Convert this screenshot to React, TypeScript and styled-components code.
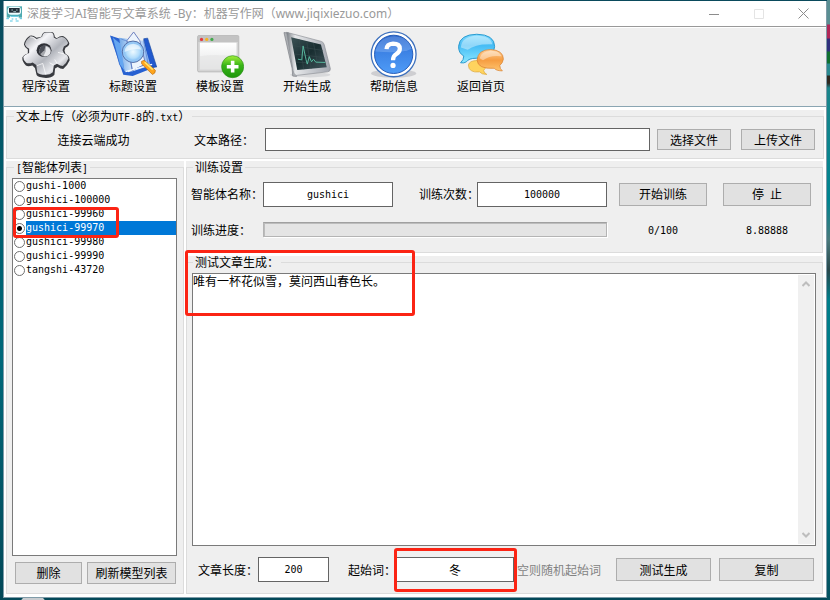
import React, { useState } from "react";
import styled, { createGlobalStyle } from "styled-components";

const GlobalStyle = createGlobalStyle`
  *, *::before, *::after { box-sizing: border-box; }
  body {
    margin: 0;
    color: #000;
    font: 12px/14px "Noto Sans CJK SC", sans-serif;
  }
  button, input, textarea { font: inherit; color: inherit; margin: 0; border-radius: 0; }
`;

const Desktop = styled.div`
  display: flex;
  min-height: 100vh;
  padding: 1px 3px 2px;
  background:
    radial-gradient(ellipse 12px 4px at 33px 100%, #c8ccd0 90%, transparent) no-repeat,
    linear-gradient(#5a8f93 24px, #b02858 25px 38px, #30307c 39px 51px, #107030 52px 63px, #2a8a90 64px 75px, #302820 76px 83px, #1b858b 88px, #008490 200px, #4a7a7c 240px, #29484c 270px, #007f8b 300px, #007484 480px, #055260) right / 3px 100% no-repeat,
    linear-gradient(#0a4a5c, #00606f 35%, #00687a 60%, #034858);
`;

const Window = styled.main`
  display: flex;
  flex: 1;
  flex-direction: column;
  min-width: 0;
  background: #fff;
  border: solid #7f9ba8;
  border-width: 0 1px 1px;
`;

const TitleBar = styled.header`
  display: flex;
  align-items: center;
  height: 26px;
  padding-left: 2px;
  border-bottom: 1px solid #999;
`;

const Title = styled.h1`
  flex: 1;
  margin: 0 0 0 4px;
  color: #999;
  font: 12px/16px "Noto Sans", "Noto Sans CJK SC", sans-serif;
  white-space: nowrap;
`;

const WindowButton = styled.button<{ $faint?: boolean }>`
  display: flex;
  align-items: center;
  justify-content: center;
  width: 45px;
  height: 24px;
  padding: 0;
  border: 0;
  background: none;
  color: ${(p) => (p.$faint ? "#e4e4e4" : "#8c8c8c")};
`;

const Toolbar = styled.nav`
  display: flex;
  gap: 15px;
  height: 79px;
  margin-top: 1px;
  padding: 3px 6px 0;
  background: #efefef;
  border-bottom: 1px solid #8aa5b2;
`;

const Tool = styled.button`
  display: flex;
  flex-direction: column;
  align-items: center;
  width: 72px;
  height: 64px;
  padding: 0;
  border: 0;
  background: none;
  svg { display: block; flex: none; }
`;

const Content = styled.div`
  display: flex;
  flex: 1;
  flex-direction: column;
  gap: 2px;
  padding: 3px 2px;
`;

const Columns = styled.div`
  display: grid;
  flex: 1;
  grid-template-columns: 178px minmax(0, 1fr);
  gap: 2px;
  padding-right: 1px;
`;

const RightColumn = styled.div`
  display: flex;
  flex-direction: column;
  gap: 3px;
`;

const Panel = styled.section<{ $grow?: boolean }>`
  position: relative;
  display: flex;
  flex: ${(p) => (p.$grow ? "1" : "none")};
  min-width: 0;
  background: #efefef;
`;

const Group = styled.fieldset<{ $pad: string }>`
  display: flex;
  flex: 1;
  flex-direction: column;
  min-width: 0;
  margin: 0;
  padding: ${(p) => p.$pad};
  border: 1px solid #dcdcdc;
`;

const Legend = styled.legend<{ $indent: number }>`
  height: 13px;
  margin-left: ${(p) => p.$indent}px;
  padding: 0 2px;
  line-height: 12px;
  white-space: nowrap;
`;

const Mono = styled.span`
  font: 10px/12px "DejaVu Sans Mono", monospace;
`;

const Field = styled.input<{ $tall?: boolean }>`
  width: 100%;
  min-width: 0;
  height: ${(p) => (p.$tall ? 25 : 23)}px;
  padding: 0 4px;
  border: 1px solid #646464;
  background: #fff;
  font: 10px/12px "DejaVu Sans Mono", "Noto Sans CJK SC", monospace;
  text-align: center;
  outline: 0;
`;

const WordField = styled(Field)`
  font: 12px/14px "Noto Sans CJK SC", sans-serif;
`;

const PushButton = styled.button`
  height: 23px;
  padding: 0;
  border: 1px solid #adadad;
  background: #e1e1e1;
  white-space: nowrap;
`;

const Label = styled.label`
  white-space: nowrap;
`;

const UploadRow = styled.div`
  display: grid;
  grid-template-columns: 173px 85px minmax(0, 1fr) 7px 74px 10px 74px;
  align-items: center;
  ${Label} { padding-left: 14px; }
  ${PushButton} { height: 21px; }
  ${PushButton}:nth-of-type(1) { grid-column: 5; }
  ${PushButton}:nth-of-type(2) { grid-column: 7; }
`;

const Centered = styled.span`
  text-align: center;
`;

const TrainGrid = styled.div`
  display: grid;
  grid-template-columns: 72px minmax(0, 1fr) 84px minmax(0, 1fr) 12px 88px 16px 88px;
  grid-template-rows: 26px 15px;
  row-gap: 15px;
  align-items: center;
  ${Label}:nth-of-type(2) { padding-left: 26px; }
  ${PushButton}:first-of-type { grid-column: 6; }
  ${PushButton}:last-of-type { grid-column: 8; }
  ${Centered}:nth-of-type(1) { grid-column: 6; }
  ${Centered}:nth-of-type(2) { grid-column: 8; }
`;

const Track = styled.div`
  grid-column: 2 / 5;
  height: 15px;
  border: 1px solid #b4b4b4;
  border-top: 1px solid #a0a0a0;
  background: #e4e4e4;
  box-shadow: 1px 1px #fff, inset 1px 1px #bcbcbc;
`;

const ListBox = styled.ul`
  flex: 1;
  margin: 0;
  padding: 0;
  border: 1px solid #7a7a7a;
  background: #fff;
  list-style: none;
`;

const ListItem = styled.li`
  label { display: flex; align-items: center; height: 14px; }
`;

const Radio = styled.input`
  appearance: none;
  flex: none;
  width: 11px;
  height: 11px;
  margin: 0 1px;
  border: 1px solid #707070;
  border-radius: 50%;
  background: #fff;
  &:checked { background: radial-gradient(circle, #000 2px, #fff 3px); }
`;

const ItemText = styled(Mono)<{ $selected: boolean }>`
  flex: 1;
  line-height: 14px;
  color: ${(p) => (p.$selected ? "#fff" : "#000")};
  background: ${(p) => (p.$selected ? "#0078d7" : "transparent")};
`;

const ListActions = styled.div`
  display: grid;
  grid-template-columns: 67px minmax(0, 1fr);
  gap: 5px;
  margin: 6px 1px 0 3px;
  ${PushButton} { height: 22px; }
`;

const Editor = styled.div`
  display: flex;
  flex: 1;
  border: 1px solid #7a7a7a;
  background: #fff;
`;

const Article = styled.textarea`
  flex: 1;
  min-width: 0;
  padding: 0;
  border: 0;
  background: transparent;
  overflow: hidden;
  resize: none;
  outline: 0;
`;

const ScrollBar = styled.div`
  display: flex;
  flex-direction: column;
  justify-content: space-between;
  width: 16px;
  margin: 1px;
  background: #f0f0f0;
`;

const ScrollButton = styled.button`
  display: flex;
  align-items: center;
  justify-content: center;
  height: 18px;
  padding: 0;
  border: 0;
  background: none;
`;

const GenerateRow = styled.div`
  display: grid;
  grid-template-columns: 60px 71px 67px minmax(0, 1fr) 102px 95px 8px 95px;
  align-items: center;
  margin: 11px 2px 0 6px;
  ${Label}:nth-of-type(2) { padding-left: 19px; }
  ${PushButton}:last-child { grid-column: 8; }
`;

const WordBox = styled.div`
  position: relative;
`;

const Hint = styled.span`
  padding-left: 3px;
  color: #838383;
  white-space: nowrap;
`;

const Highlight = styled.div`
  position: absolute;
  border: 3px solid #fb2414;
  border-radius: 3px;
  pointer-events: none;
`;

const WordHighlight = styled(Highlight)`
  inset: -9px -3px -10px -2px;
`;

const ArticleHighlight = styled(Highlight)`
  inset: -6px auto auto -1px;
  width: 230px;
  height: 66px;
`;

const ListHighlight = styled(Highlight)`
  inset: 46px auto auto 7px;
  width: 106px;
  height: 31px;
`;

const RobotIcon = () => (
  <svg width="17" height="16" viewBox="18 15 51 48" aria-hidden="true">
    <path d="M20 16H66V50H20Z" fill="#4faab1" />
    <path d="M23 28Q23 18 33 17H54Q63 18 63 28V33Q62 41 53 41H33Q24 41 23 33Z" fill="#eefcff" />
    <path d="M27 21H59V35H27Z" fill="#222d38" />
    <path d="M34 27h5M48 27h5M40 32h8" stroke="#d8ffff" strokeWidth="2" />
    <path d="M31 45H55L59 62H27Z" fill="#fff" />
    <path d="M32 46h22M19 53h8M59 53h7M35 54h5M46 54h5M30 60h8M47 60h9" stroke="#53c5e1" strokeWidth="3" />
  </svg>
);

const GearIcon = () => (
  <svg width="48" height="48" viewBox="66 93 148 146" aria-hidden="true">
    <defs>
      <linearGradient id="gearFace" x1="0" y1="0" x2="1" y2="1">
        <stop stopColor="#85878e" /><stop offset=".3" stopColor="#f5f5f8" />
        <stop offset=".55" stopColor="#b2b5bc" /><stop offset=".75" stopColor="#e8e9ed" /><stop offset="1" stopColor="#696c72" />
      </linearGradient>
    </defs>
    <path d="M126 110Q128 96 138 95H158Q166 97 167 110L173 114Q184 106 194 108Q206 114 212 130Q212 138 200 144L197 152L200 162Q213 168 213 182Q206 199 193 209Q184 209 176 203L168 208L166 227Q157 237 140 237Q116 236 111 228L106 206L98 198Q84 203 78 198Q66 187 67 174Q70 166 84 161V149Q73 142 72 134Q75 116 90 107Q99 104 111 113Z" fill="#393b40" />
    <path d="M128 110Q130 98 139 97H156Q164 99 164 112L172 117Q184 108 193 111Q203 115 208 129Q207 135 195 140L191 151L196 162Q208 166 209 177Q204 191 192 200Q184 200 174 193L164 198L161 219Q153 227 139 227Q119 227 113 220L110 197L99 189Q86 194 79 190Q69 181 70 172Q73 166 88 160V147Q77 141 75 134Q78 118 91 110Q99 107 111 117Z" fill="url(#gearFace)" />
    <path d="M90 110Q100 108 110 120M112 199L130 192L139 226M164 197L151 190M174 192L167 180M197 163L177 158" fill="none" stroke="#fff" strokeWidth="3" opacity=".75" />
    <ellipse cx="134" cy="151" rx="23" ry="21" fill="#303238" />
    <ellipse cx="137" cy="154" rx="18" ry="17" fill="#a7a9ae" />
    <path d="M119 151Q125 135 139 135L135 151L122 164Z" fill="#4d5058" />
    <path d="M140 140Q157 145 153 161Q146 171 132 170L139 155Z" fill="#e7e8eb" />
  </svg>
);

const SearchBookIcon = () => (
  <svg width="48" height="48" viewBox="327 93 148 146" aria-hidden="true">
    <defs>
      <radialGradient id="lens"><stop stopColor="#eefaff" /><stop offset=".6" stopColor="#b1dcfb" /><stop offset="1" stopColor="#64aaf0" /></radialGradient>
      <linearGradient id="page" x2="1"><stop stopColor="#70a7e7" /><stop offset=".5" stopColor="#e6f3ff" /><stop offset="1" stopColor="#7fadf0" /></linearGradient>
    </defs>
    <path d="M330 106L361 116L386 219L460 194L472 202L400 231L371 227Z" fill="#2761d2" />
    <path d="M434 116L446 114L474 203L451 204Z" fill="#2259ce" stroke="#1549a3" strokeWidth="2" />
    <path d="M337 110L365 132L376 218L360 196Z" fill="#64a6f1" stroke="#285ec9" strokeWidth="2" />
    <path d="M358 113L433 122L455 198L400 216L375 216Z" fill="url(#page)" />
    <path d="M382 122L403 95L422 122L440 195L399 214Z" fill="#edf4fc" stroke="#6c7ebd" strokeWidth="3" />
    <path d="M365 117L385 124L399 215M433 120L447 190L399 214" fill="none" stroke="#537bc9" strokeWidth="2" />
    <path d="M378 217L460 195" stroke="#f5faff" strokeWidth="4" />
    <path d="M427 186L435 182L470 213Q471 223 461 226L428 194Z" fill="#ffa51c" stroke="#b66b12" strokeWidth="2" />
    <path d="M437 188L462 211" stroke="#ffe46b" strokeWidth="5" />
    <circle cx="401" cy="156" r="33" fill="url(#lens)" stroke="#596fa4" strokeWidth="3" />
    <circle cx="401" cy="156" r="29" fill="none" stroke="#9ac9f3" strokeWidth="4" />
    <path d="M375 157Q376 132 402 131Q423 133 427 150Q405 143 375 157Z" fill="#fff" opacity=".6" />
  </svg>
);

const TemplateIcon = () => (
  <svg width="48" height="48" viewBox="590 93 148 146" aria-hidden="true">
    <defs>
      <linearGradient id="sheet" x2="0" y2="1"><stop stopColor="#fff" /><stop offset="1" stopColor="#e3e4e5" /></linearGradient>
      <linearGradient id="plus" x2="0" y2="1"><stop stopColor="#a2ee3a" /><stop offset=".45" stopColor="#38b418" /><stop offset="1" stopColor="#1e970c" /></linearGradient>
    </defs>
    <rect x="595" y="106" width="127" height="112" rx="4" fill="#d4d4d4" stroke="#a5a5a5" strokeWidth="2" />
    <path d="M596 107H721V126H596Z" fill="#c3c3c3" />
    <path d="M602 128H715V211H602Z" fill="url(#sheet)" />
    <path d="M602 170Q660 160 715 173V211H602Z" fill="#e4e5e5" opacity=".6" />
    <circle cx="607" cy="118" r="5" fill="#e5383d" /><circle cx="623" cy="118" r="5" fill="#f5b423" /><circle cx="639" cy="118" r="5" fill="#42a94b" />
    <circle cx="703" cy="202" r="34" fill="url(#plus)" stroke="#2b9018" strokeWidth="2" />
    <path d="M703 184V220M685 202H721" stroke="#fff" strokeWidth="11" />
  </svg>
);

const MonitorIcon = () => (
  <svg width="48" height="48" viewBox="57 93 148 146" aria-hidden="true">
    <defs>
      <linearGradient id="metal"><stop stopColor="#777c82" /><stop offset=".2" stopColor="#e6e8ea" /><stop offset="1" stopColor="#a4a8b1" /></linearGradient>
      <linearGradient id="screen" x1="0" y1="0" x2="1" y2="1"><stop stopColor="#3b5255" /><stop offset=".5" stopColor="#182d30" /><stop offset="1" stopColor="#43565d" /></linearGradient>
    </defs>
    <ellipse cx="141" cy="227" rx="62" ry="8" fill="#d8d9db" />
    <path d="M60 97L75 98L99 232L87 231L85 207Z" fill="#aeb1b5" stroke="#777a80" strokeWidth="2" />
    <path d="M68 96L175 124Q182 126 184 134L203 208Q204 217 194 218L98 229Q89 226 88 214Z" fill="url(#metal)" stroke="#8b8e95" strokeWidth="2" />
    <path d="M82 111L174 134L192 204L101 212Z" fill="url(#screen)" />
    <path d="M88 137L179 152M93 163L184 174M97 188L188 192M107 118L121 210M130 124L144 208M151 129L166 206" stroke="#34494c" strokeWidth="2" fill="none" />
    <path d="M103 179L115 181L119 138L128 180L132 194L138 171L145 187L151 179L158 188L187 189" stroke="#57b89e" strokeWidth="3" fill="none" />
  </svg>
);

const HelpIcon = () => (
  <svg width="48" height="48" viewBox="318 93 148 146" aria-hidden="true">
    <defs><linearGradient id="help" x2="0" y2="1"><stop stopColor="#225dc5" /><stop offset=".45" stopColor="#3d83e5" /><stop offset="1" stopColor="#4f9cf7" /></linearGradient></defs>
    <ellipse cx="391" cy="223" rx="70" ry="13" fill="#ceced1" />
    <circle cx="391" cy="164" r="69" fill="#fff" stroke="#3d70bd" strokeWidth="4" />
    <circle cx="391" cy="164" r="59" fill="url(#help)" stroke="#235ab7" strokeWidth="3" />
    <path d="M334 155Q347 108 394 108Q436 111 446 147Q420 162 334 155Z" fill="#aed1ff" opacity=".3" />
    <path d="M369 148Q370 132 389 131Q410 131 410 147Q410 157 399 163Q389 169 389 182" fill="none" stroke="#fff" strokeWidth="13" />
    <circle cx="389" cy="198" r="8" fill="#fff" />
  </svg>
);

const ChatIcon = () => (
  <svg width="48" height="48" viewBox="579 93 148 146" aria-hidden="true">
    <defs>
      <linearGradient id="blueChat" x2="0" y2="1"><stop stopColor="#82dcff" /><stop offset=".4" stopColor="#46bcf5" /><stop offset="1" stopColor="#8ce8ff" /></linearGradient>
      <linearGradient id="orangeChat" x2="0" y2="1"><stop stopColor="#ffd099" /><stop offset=".5" stopColor="#f69d41" /><stop offset="1" stopColor="#ffc56f" /></linearGradient>
    </defs>
    <path d="M614 197Q617 183 642 183Q667 185 668 201Q667 209 661 213Q661 220 671 226Q654 226 649 218Q615 222 614 197Z" fill="#ffd35e" stroke="#d8a437" strokeWidth="2" />
    <path d="M640 102Q695 103 695 140Q694 176 638 176Q615 176 608 187Q601 192 590 190Q600 181 600 169Q583 160 584 139Q587 103 640 102Z" fill="url(#blueChat)" stroke="#2798ce" strokeWidth="3" />
    <path d="M591 143Q593 109 640 107Q682 107 688 133Q638 130 612 150Z" fill="#fff" opacity=".4" />
    <path d="M682 149Q722 151 722 179Q720 191 711 198Q711 209 719 215Q700 215 694 207Q643 210 641 182Q643 150 682 149Z" fill="url(#orangeChat)" stroke="#d57b2c" strokeWidth="2" />
    <path d="M649 176Q652 155 684 153Q710 154 716 170Q682 165 659 182Z" fill="#fff" opacity=".4" />
  </svg>
);

const tools = [
  { label: "程序设置", Icon: GearIcon },
  { label: "标题设置", Icon: SearchBookIcon },
  { label: "模板设置", Icon: TemplateIcon },
  { label: "开始生成", Icon: MonitorIcon },
  { label: "帮助信息", Icon: HelpIcon },
  { label: "返回首页", Icon: ChatIcon },
];

const agents = ["gushi-1000", "gushici-100000", "gushici-99960", "gushici-99970", "gushici-99980", "gushici-99990", "tangshi-43720"];

export default function App() {
  const [agent, setAgent] = useState("gushici-99970");
  return (
    <Desktop lang="zh-CN">
      <GlobalStyle />
      <Window>
        <TitleBar>
          <RobotIcon />
          <Title>深度学习AI智能写文章系统 -By：机器写作网（www.jiqixiezuo.com）</Title>
          <WindowButton aria-label="最小化">
            <svg width="10" height="10"><path d="M0 5.5H10" stroke="currentColor" /></svg>
          </WindowButton>
          <WindowButton aria-label="最大化" $faint>
            <svg width="10" height="10"><path d="M.5.5h9v9h-9z" fill="none" stroke="currentColor" /></svg>
          </WindowButton>
          <WindowButton aria-label="关闭">
            <svg width="11" height="11"><path d="M.5.5l10 10M10.500.5l-10 10" stroke="currentColor" /></svg>
          </WindowButton>
        </TitleBar>
        <Toolbar>
          {tools.map(({ label, Icon }) => (
            <Tool key={label}><Icon />{label}</Tool>
          ))}
        </Toolbar>
        <Content>
          <Panel>
            <Group $pad="5px 8px 7px 0">
              <Legend $indent={7}>文本上传（必须为<Mono>UTF-8</Mono>的<Mono>.txt</Mono>）</Legend>
              <UploadRow>
                <Centered>连接云端成功</Centered>
                <Label htmlFor="path">文本路径：</Label>
                <Field id="path" />
                <PushButton>选择文件</PushButton>
                <PushButton>上传文件</PushButton>
              </UploadRow>
            </Group>
          </Panel>
          <Columns>
            <Panel>
              <Group $pad="4px 6px 9px 5px">
                <Legend $indent={2}><Mono>[</Mono>智能体列表<Mono>]</Mono></Legend>
                <ListBox>
                  {agents.map((name) => (
                    <ListItem key={name}>
                      <label>
                        <Radio type="radio" name="agent" checked={agent === name} onChange={() => setAgent(name)} />
                        <ItemText $selected={agent === name}>{name}</ItemText>
                      </label>
                    </ListItem>
                  ))}
                </ListBox>
                <ListActions>
                  <PushButton>删除</PushButton>
                  <PushButton>刷新模型列表</PushButton>
                </ListActions>
              </Group>
              <ListHighlight />
            </Panel>
            <RightColumn>
              <Panel>
                <Group $pad="7px 11px 15px 4px">
                  <Legend $indent={2}>训练设置</Legend>
                  <TrainGrid>
                    <Label htmlFor="name">智能体名称：</Label>
                    <Field id="name" $tall defaultValue="gushici" />
                    <Label htmlFor="times">训练次数：</Label>
                    <Field id="times" $tall defaultValue="100000" />
                    <PushButton>开始训练</PushButton>
                    <PushButton>停<Mono> </Mono>止</PushButton>
                    <Label id="progress">训练进度：</Label>
                    <Track role="progressbar" aria-labelledby="progress" aria-valuenow={0} />
                    <Centered><Mono>0/100</Mono></Centered>
                    <Centered><Mono>8.88888</Mono></Centered>
                  </TrainGrid>
                </Group>
              </Panel>
              <Panel $grow>
                <Group $pad="4px 6px 11px 5px">
                  <Legend $indent={1}><label htmlFor="article">测试文章生成：</label></Legend>
                  <Editor>
                    <Article id="article" defaultValue="唯有一杯花似雪，莫问西山春色长。" />
                    <ScrollBar>
                      <ScrollButton aria-label="向上滚动">
                        <svg width="8" height="6"><path d="M.5 5L4 1.500L7.500 5" fill="none" stroke="#bdbdbd" strokeWidth="2" /></svg>
                      </ScrollButton>
                      <ScrollButton aria-label="向下滚动">
                        <svg width="8" height="6"><path d="M.5 1L4 4.500L7.500 1" fill="none" stroke="#bdbdbd" strokeWidth="2" /></svg>
                      </ScrollButton>
                    </ScrollBar>
                  </Editor>
                  <GenerateRow>
                    <Label htmlFor="length">文章长度：</Label>
                    <Field id="length" $tall defaultValue="200" />
                    <Label htmlFor="word">起始词：</Label>
                    <WordBox>
                      <WordField id="word" $tall defaultValue="冬" />
                      <WordHighlight />
                    </WordBox>
                    <Hint>空则随机起始词</Hint>
                    <PushButton>测试生成</PushButton>
                    <PushButton>复制</PushButton>
                  </GenerateRow>
                </Group>
                <ArticleHighlight />
              </Panel>
            </RightColumn>
          </Columns>
        </Content>
      </Window>
    </Desktop>
  );
}
